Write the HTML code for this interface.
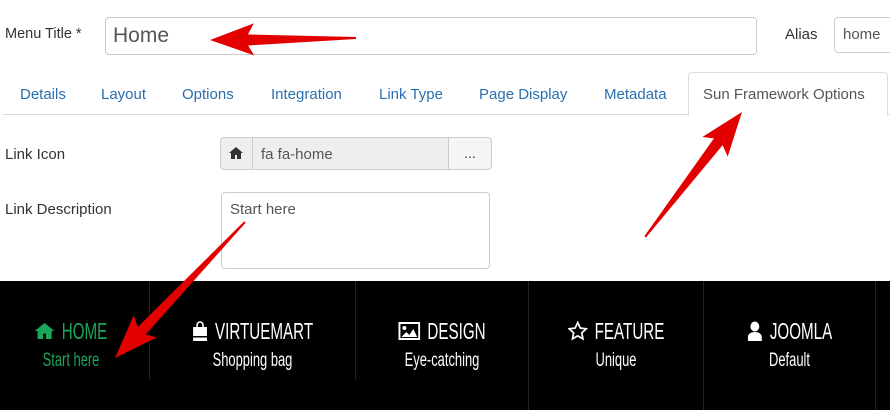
<!DOCTYPE html>
<html><head><meta charset="utf-8"><style>
*{margin:0;padding:0;box-sizing:border-box}
body{width:890px;height:410px;overflow:hidden;background:#fff;font-family:"Liberation Sans",sans-serif;position:relative;color:#333}
.a{position:absolute}
.tab{position:absolute;top:86px;font-size:15px;color:#2a6fb0}
.nav{position:absolute;top:281px;left:0;width:890px;height:129px;background:#000}
.it{position:absolute;top:38px;text-align:center;color:#fff}
.it .t{font-size:23px;display:flex;align-items:center;justify-content:center;gap:11px;height:24px;transform:scaleX(.66)}
.it .s{font-size:19px;margin-top:7px;transform:scaleX(.68)}
.div{position:absolute;top:0;width:1px;background:#222}
</style></head><body>
<div class="a" style="left:5px;top:26px;font-size:14.5px">Menu Title *</div>
<div class="a" style="left:105px;top:17px;width:652px;height:38px;border:1px solid #ccc;border-radius:4px;font-size:21px;color:#555;padding:6px 7px">Home</div>
<div class="a" style="left:785px;top:26px;font-size:15px">Alias</div>
<div class="a" style="left:834px;top:17px;width:70px;height:36px;border:1px solid #ccc;border-radius:4px;font-size:15px;color:#555;padding:8px 8px">home</div>

<div class="a" style="left:3px;top:114px;width:887px;height:1px;background:#ddd"></div>
<div class="tab" style="left:20px">Details</div>
<div class="tab" style="left:101px">Layout</div>
<div class="tab" style="left:182px">Options</div>
<div class="tab" style="left:271px">Integration</div>
<div class="tab" style="left:379px">Link Type</div>
<div class="tab" style="left:479px">Page Display</div>
<div class="tab" style="left:604px">Metadata</div>
<div class="a" style="left:688px;top:72px;width:200px;height:44px;border:1px solid #ddd;border-bottom:none;border-radius:4px 4px 0 0;background:#fff"></div>
<div class="tab" style="left:703px;color:#555">Sun Framework Options</div>

<div class="a" style="left:5px;top:146px;font-size:15px">Link Icon</div>
<div class="a" style="left:220px;top:137px;width:272px;height:33px;border:1px solid #ccc;border-radius:4px;background:#eee"></div>
<div class="a" style="left:252px;top:138px;width:1px;height:31px;background:#ccc"></div>
<div class="a" style="left:448px;top:138px;width:43px;height:31px;background:#f5f5f5;border-left:1px solid #ccc;border-radius:0 4px 4px 0;text-align:center;font-size:14px;padding-top:7px">...</div>
<svg class="a" style="left:229px;top:147px" width="14" height="12" viewBox="0 0 14 12"><path d="M7 0L0 6h2v6h4V8h2v4h4V6h2z" fill="#333"/></svg>
<div class="a" style="left:261px;top:146px;font-size:15px;color:#555">fa fa-home</div>

<div class="a" style="left:5px;top:201px;font-size:15px">Link Description</div>
<div class="a" style="left:221px;top:192px;width:269px;height:77px;border:1px solid #ccc;border-radius:4px;font-size:15px;color:#555;padding:8px 8px">Start here</div>

<div class="nav">
<div class="div" style="left:149px;height:99px"></div>
<div class="div" style="left:355px;height:99px"></div>
<div class="div" style="left:528px;height:129px"></div>
<div class="div" style="left:703px;height:129px"></div>
<div class="div" style="left:875px;height:129px"></div>
<div class="it" style="left:0;width:142px;color:#1aa75a"><div class="t"><svg width="30" height="16" viewBox="0 0 14 12" preserveAspectRatio="none"><path d="M7 0L0 6h2v6h4V8h2v4h4V6h2z" fill="#1aa75a"/></svg>HOME</div><div class="s">Start here</div></div>
<div class="it" style="left:150px;width:205px"><div class="t"><svg width="24" height="20" viewBox="0 0 16 20" preserveAspectRatio="none"><path d="M5 6V4a3 3 0 016 0v2" stroke="#fff" stroke-width="1.6" fill="none"/><rect x="1" y="6" width="14" height="14" fill="#fff"/><rect x="1" y="15" width="14" height="1.5" fill="#000"/></svg>VIRTUEMART</div><div class="s">Shopping bag</div></div>
<div class="it" style="left:356px;width:172px"><div class="t"><svg width="33" height="18" viewBox="0 0 22 18" preserveAspectRatio="none"><rect x="1" y="1" width="20" height="16" fill="none" stroke="#fff" stroke-width="2"/><circle cx="6" cy="6" r="2" fill="#fff"/><path d="M3 15l5-5 3 3 4-6 4 8z" fill="#fff"/></svg>DESIGN</div><div class="s">Eye-catching</div></div>
<div class="it" style="left:529px;width:174px"><div class="t"><svg width="30" height="20" viewBox="0 0 20 20" preserveAspectRatio="none"><path d="M10 1.5l2.6 5.6 6 .7-4.5 4.1 1.2 6L10 14.9 4.7 17.9l1.2-6L1.4 7.8l6-.7z" fill="none" stroke="#fff" stroke-width="1.7"/></svg>FEATURE</div><div class="s">Unique</div></div>
<div class="it" style="left:704px;width:171px"><div class="t"><svg width="24" height="20" viewBox="0 0 16 20" preserveAspectRatio="none"><ellipse cx="8" cy="5.5" rx="4.5" ry="5" fill="#fff"/><path d="M1 20v-4c0-3 3-5 7-5s7 2 7 5v4z" fill="#fff"/></svg>JOOMLA</div><div class="s">Default</div></div>
</div>

<svg class="a" style="left:0;top:0" width="890" height="410">
<g fill="#e30000">
<g transform="translate(210,40) rotate(-0.8)"><polygon points="0,0 44,-16 38,-5 146,-1 146,1 38,6 44,16"/></g>
<g transform="translate(742,112) rotate(127.8)"><polygon points="0,0 44,-16 38,-5 158,-1 158,1 38,6 44,16"/></g>
<g transform="translate(115,358) rotate(-46.3)"><polygon points="0,0 44,-16 38,-5 188,-1 188,1 38,6 44,16"/></g>
</g>
</svg>
</body></html>
